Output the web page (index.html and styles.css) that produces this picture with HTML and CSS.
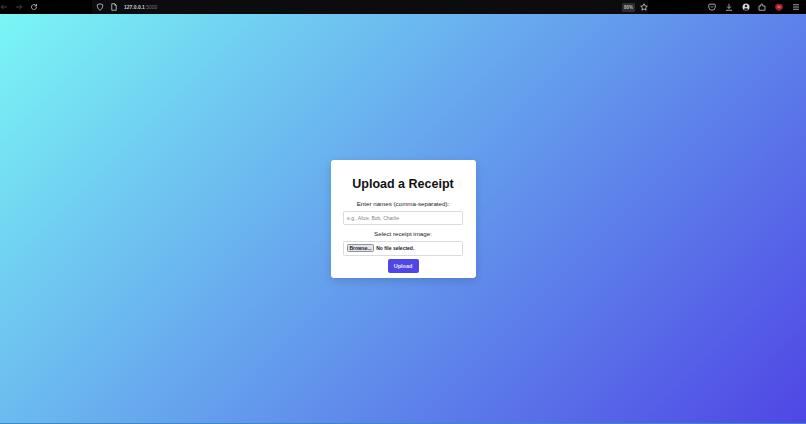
FILE: index.html
```html
<!DOCTYPE html>
<html lang="en">
<head>
<meta charset="utf-8">
<title>Upload a Receipt</title>
<link rel="stylesheet" href="styles.css">
</head>
<body>
<header class="toolbar">
  <div class="nav">
    <svg class="icon dim" viewBox="0 0 16 16"><path d="M14 8H3M7 3.5 2.5 8 7 12.5"/></svg>
    <svg class="icon dim" viewBox="0 0 16 16"><path d="M2 8h11M9 3.5 13.500 8 9 12.500"/></svg>
    <svg class="icon" viewBox="0 0 16 16"><path d="M13 8a5 5 0 1 1-1.500-3.500L13 6M13 2v4H9"/></svg>
  </div>
  <div class="urlbar">
    <svg class="icon" viewBox="0 0 16 16"><path d="M8 1.500 13.500 3.500c0 5-1.500 9-5.500 11-4-2-5.500-6-5.500-11z"/></svg>
    <svg class="icon" viewBox="0 0 16 16"><path d="M3.500 1.500h6l3 3v10h-9zM9.500 1.500v3h3"/></svg>
    <span class="url">127.0.0.1<span class="port">:5000</span></span>
    <span class="zoom-badge">80%</span>
    <svg class="icon" viewBox="0 0 16 16"><path d="M8 1.500l2 4.300 4.700.6-3.500 3.200.9 4.700L8 11.900l-4.100 2.400.9-4.700L1.300 6.400 6 5.800z"/></svg>
  </div>
  <div class="tools">
    <svg class="icon" viewBox="0 0 16 16"><path d="M2.500 2.500h11a1 1 0 0 1 1 1V8a6.500 6.500 0 0 1-13 0V3.500a1 1 0 0 1 1-1zM5.500 6.500 8 9l2.500-2.500"/></svg>
    <svg class="icon" viewBox="0 0 16 16"><path d="M8 1.500v9M4 7l4 4 4-4M2 14.500h12"/></svg>
    <svg class="icon filled" viewBox="0 0 16 16"><circle cx="8" cy="8" r="7"/><circle class="cut" cx="8" cy="6.200" r="2.500"/><path class="cut" d="M3.500 12.500c1-2.500 8-2.500 9 0a6.500 6.500 0 0 1-9 0z"/></svg>
    <svg class="icon" viewBox="0 0 16 16"><path d="M2 6h3.500V4a2 2 0 0 1 4 0v2H14v8.500H2z"/></svg>
    <svg class="icon ext" viewBox="0 0 16 16"><path d="M1.500 5 4 2.500h8L14.500 5v5c0 2-3 4.500-6.500 4.500S1.500 12 1.500 10z"/><path class="bar" d="M5 8h6"/></svg>
    <svg class="icon" viewBox="0 0 16 16"><path d="M2 3.500h12M2 8h12M2 12.500h12"/></svg>
  </div>
</header>
<main class="stage">
  <form class="card">
    <h1 class="title">Upload a Receipt</h1>
    <label class="label" for="names">Enter names (comma-separated):</label>
    <input class="field" id="names" type="text" placeholder="e.g., Alice, Bob, Charlie">
    <label class="label" for="receipt">Select receipt image:</label>
    <div class="field file-field" id="receipt"><span class="browse">Browse...</span><span class="file-name">No file selected.</span></div>
    <button class="submit" type="button">Upload</button>
  </form>
</main>
</body>
</html>
```
FILE: styles.css
```css
* { box-sizing: border-box; }
html, body { height: 100%; }
body {
  margin: 0;
  display: flex;
  flex-direction: column;
  font-family: "Liberation Sans", Arial, sans-serif;
  background: #000;
}
.toolbar {
  height: 14px;
  flex: none;
  display: flex;
  align-items: center;
  background: #000;
  color: #d8d8d8;
}
.icon {
  width: 8px;
  height: 8px;
  flex: none;
  fill: none;
  stroke: currentColor;
  stroke-width: 1.5;
}
.dim { color: #5a5a5a; }
.nav {
  width: 92px;
  flex: none;
  display: flex;
  gap: 7px;
  padding-left: 0;
  align-items: center;
}
.nav .icon { width: 8px; }
.urlbar {
  flex: 1;
  display: flex;
  align-items: center;
  gap: 6px;
  padding-left: 4px;
  background: #0c0c0e;
  height: 14px;
}
.url { font-size: 5px; font-weight: 700; color: #cfcfcf; flex: 1; }
.port { color: #777; font-weight: 400; }
.zoom-badge {
  font-size: 4.500px;
  font-weight: 700;
  background: #2d2d30;
  color: #bbb;
  padding: 2px 2px;
  border-radius: 1px;
  margin-right: -1px;
}
.tools {
  width: 158px;
  flex: none;
  display: flex;
  justify-content: space-between;
  align-items: center;
  padding: 0 6px 0 60px;
}
.filled { fill: #d8d8d8; stroke: none; }
.filled .cut { fill: #222; }
.ext { fill: #b3202e; stroke: #b3202e; }
.ext .bar { stroke: #f2c8cc; }
.stage {
  flex: 1;
  display: flex;
  align-items: center;
  justify-content: center;
  background: linear-gradient(135deg, #7af6f5 0%, #4f46e5 100%);
  border-bottom: 1px solid #3b8cc0;
}
.card {
  width: 145px;
  height: 118px;
  display: flex;
  flex-direction: column;
  align-items: center;
  padding: 17px 12px 0;
  background: #fff;
  border-radius: 3px;
  box-shadow: 0 3px 10px rgba(0, 0, 0, .14);
}
.title {
  margin: 0 0 9px;
  font-size: 12.500px;
  line-height: 14px;
  font-weight: 700;
  color: #111;
}
.label {
  font-size: 6.200px;
  line-height: 8px;
  color: #222;
  margin-bottom: 3px;
}
.field {
  width: 120px;
  height: 14px;
  flex: none;
  margin: 0 0 5px;
  padding: 0 3px;
  background: #fff;
  border: 1px solid #d8dbe0;
  border-radius: 1.500px;
  font-family: inherit;
  font-size: 5px;
  outline: none;
}
.field::placeholder { color: #858585; opacity: 1; }
.file-field {
  height: 15px;
  display: flex;
  align-items: center;
  gap: 2px;
  margin-bottom: 3px;
  font-size: 5px;
  font-weight: 700;
  color: #222;
}
.browse {
  background: #e4e4e6;
  border: 1px solid #8f8f9d;
  border-radius: 1.500px;
  padding: 0 1.500px;
  height: 8px;
  line-height: 6px;
  flex: none;
}
.submit {
  width: 31px;
  height: 14px;
  padding: 0;
  border: 0;
  border-radius: 2px;
  background: #4f46e5;
  color: #e8e8ff;
  font-family: inherit;
  font-size: 5.500px;
  font-weight: 700;
}
```
